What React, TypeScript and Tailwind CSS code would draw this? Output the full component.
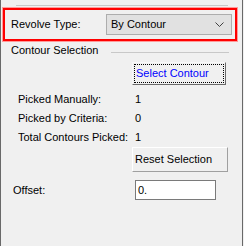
import React from "react";

export default function App() {
  const font = { fontFamily: '"Liberation Sans", Arial, sans-serif' };
  return (
    <div
      className="w-[244px] h-[246px] bg-[#f0f0f0] flex text-[11px] text-black leading-none whitespace-nowrap"
      style={font}
    >
      <div className="w-px h-full bg-[#696969]" />
      <div className="flex-1 flex flex-col relative">
        <div className="mt-[5px] ml-[15px] w-[212px] h-px bg-[#c8c8c8]" />
        <div className="mt-[2px] ml-[2px] w-[234px] h-[33px] border-2 border-[#ff0000] shadow-[0_0_0_1px_#ff9a9a] flex items-center">
          <span className="ml-[6px] w-[95px]">Revolve Type:</span>
          <div className="w-[126px] h-[21px] border border-[#adadad] bg-[#e1e1e1] flex items-center justify-between px-[4px]">
            <span>By Contour</span>
            <svg width="9" height="6" viewBox="0 0 9 6" className="mr-[3px]">
              <path d="M0.5 0.5 L4.5 4.5 L8.5 0.5" fill="none" stroke="#404040" strokeWidth="1" />
            </svg>
          </div>
        </div>
        <div className="mt-[3px] flex items-center h-[13px]">
          <span className="ml-[10px]">Contour Selection</span>
          <div className="ml-[13px] w-[118px] h-px bg-[#c8c8c8] mt-[3px]" />
        </div>
        <div className="mt-[5px] ml-[131px] w-[94px] h-[23px] bg-[#f0f0f0] border border-[#f8f8f8] border-r-[#696969] border-b-[#696969] flex items-center p-[1px]">
          <div className="w-full h-full border border-dotted border-black flex items-center px-[1px]">
            <span className="text-[#0000ff]">Select Contour</span>
          </div>
        </div>
        <div className="mt-[8px] flex flex-col gap-[6px]">
          <div className="flex items-center h-[13px]">
            <span className="ml-[17px] w-[117px]">Picked Manually:</span>
            <span>1</span>
          </div>
          <div className="flex items-center h-[13px]">
            <span className="ml-[17px] w-[117px]">Picked by Criteria:</span>
            <span>0</span>
          </div>
          <div className="flex items-center h-[13px]">
            <span className="ml-[17px] w-[117px]">Total Contours Picked:</span>
            <span>1</span>
          </div>
        </div>
        <div className="mt-[3px] ml-[131px] w-[96px] h-[25px] bg-[#f0f0f0] border border-[#ffffff] border-r-[#a0a0a0] border-b-[#a0a0a0] flex items-center px-[2px]">
          <span>Reset Selection</span>
        </div>
        <div className="mt-[8px] flex items-center">
          <span className="ml-[12px] w-[122px]">Offset:</span>
          <div className="w-[81px] h-[20px] bg-white border border-[#7a7a7a] flex items-center px-[2px]">
            <span>0.</span>
          </div>
        </div>
      </div>
      <div className="w-px h-full bg-[#696969]" />
      <div className="w-px h-full bg-[#f0f0f0]" />
    </div>
  );
}
